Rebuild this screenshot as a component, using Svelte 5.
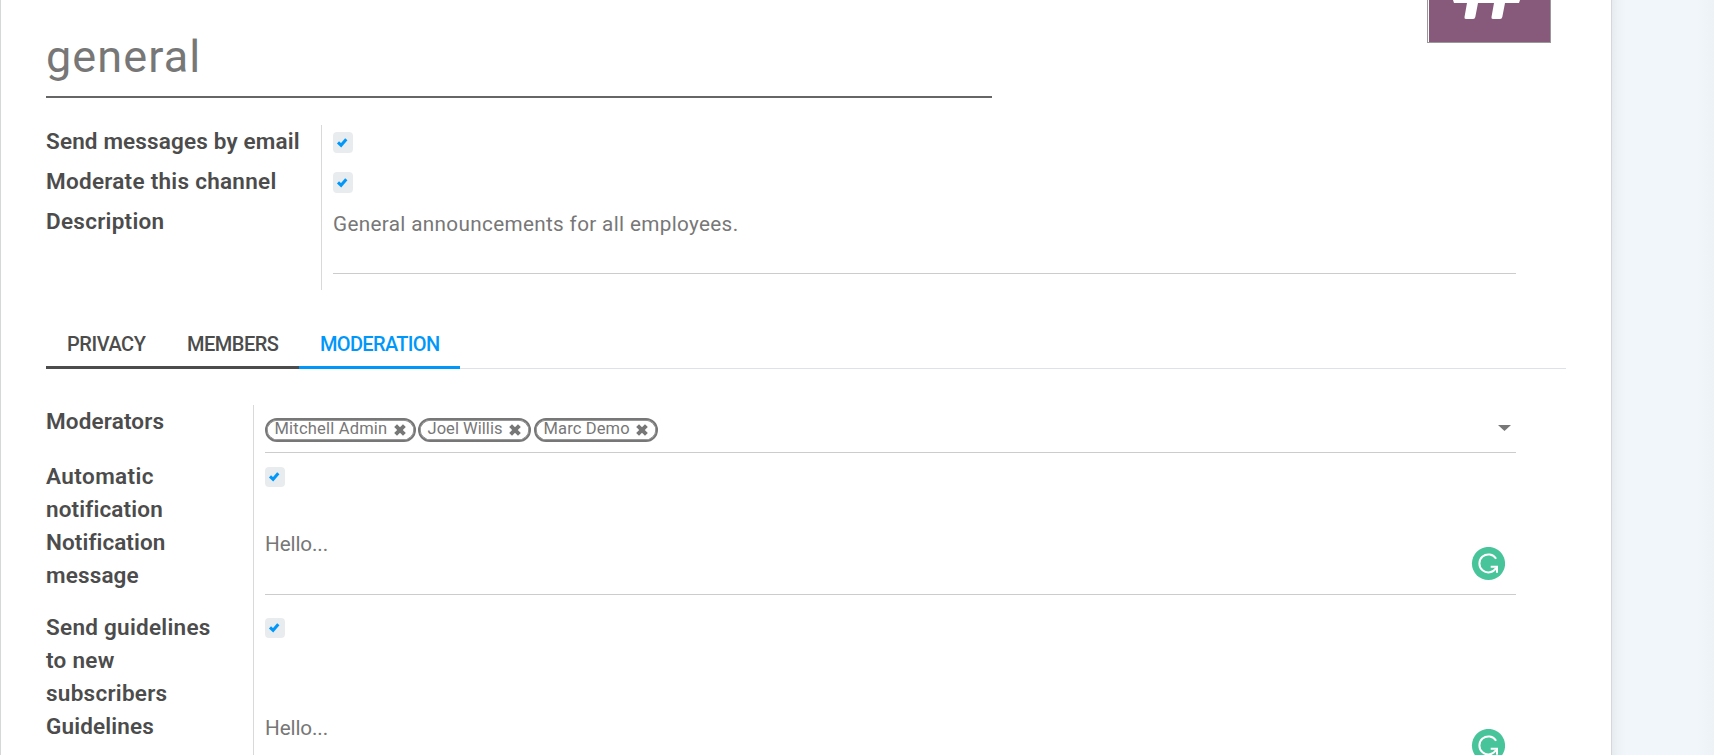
<script>
  const tabs = [
    { name: 'PRIVACY', w: 120, ls: -0.45, active: false },
    { name: 'MEMBERS', w: 133, ls: -0.5, active: false },
    { name: 'MODERATION', w: 161, ls: -0.66, active: true }
  ];
  const tags = [
    { name: 'Mitchell Admin', w: 151, ls: 0.2 },
    { name: 'Joel Willis', w: 113, ls: 0.04 },
    { name: 'Marc Demo', w: 124, ls: 0.14 }
  ];
</script>

{#snippet check()}
  <span class="check">
    <svg width="20" height="20" viewBox="0 0 20 20"><path d="M5 10.300 L8.100 13.300 L13.300 7.300" fill="none" stroke="#0097fb" stroke-width="3" /></svg>
  </span>
{/snippet}

{#snippet badge()}
  <svg class="badge" width="34" height="34" viewBox="0 0 34 34">
    <circle cx="17.5" cy="16.5" r="16.6" fill="#48c49b" />
    <path d="M25.100 11.800 A9 9 0 1 0 25.100 21.100" fill="none" stroke="#fff" stroke-width="2" />
    <path d="M19.700 19.800 H26 V25.800" fill="none" stroke="#fff" stroke-width="2" />
  </svg>
{/snippet}

<div class="page">
  <main class="sheet">
    <header>
      <div class="title"><span>general</span></div>
      <div class="avatar">
        <svg width="122" height="42" viewBox="0 0 122 42"><rect x="1" width="121" height="42" fill="#875a7b" /><path d="M25 0 H92 L91 3 H77 L74.300 17 Q74 19 72 19 H65 Q63 19 63.500 17 L66 3 H50 L47.300 17 Q47 19 45 19 H38 Q36 19 36.500 17 L39 3 H26 Z" fill="#fff" /></svg>
      </div>
    </header>

    <section class="group first">
      <div class="labels">
        <div class="label tight">Send messages by email</div>
        <div class="label">Moderate this channel</div>
        <div class="label">Description</div>
      </div>
      <div class="fields">
        {@render check()}
        {@render check()}
        <div class="area desc">General announcements for all employees.</div>
      </div>
    </section>

    <nav>
      {#each tabs as tab}
        <div class="tab" class:active={tab.active} style:width="{tab.w}px" style:letter-spacing="{tab.ls}px">{tab.name}</div>
      {/each}
      <div class="rest"></div>
    </nav>

    <section class="group second">
      <div class="labels">
        <div class="label tight mods">Moderators</div>
        <div class="label two"><span class="wide">Automatic</span><br /><span class="tight">notification</span></div>
        <div class="label tight msg"><span class="snug">Notification</span><br />message</div>
        <div class="label three">Send guidelines<br />to new<br />subscribers</div>
        <div class="label tight">Guidelines</div>
      </div>
      <div class="fields">
        <div class="tags">
          {#each tags as tag}
            <div class="tag" style:width="{tag.w}px">
              <span style:letter-spacing="{tag.ls}px">{tag.name}</span>
              <svg width="12" height="12" viewBox="0 0 12 12"><path d="M1.600 1.600 L10.400 10.400 M10.400 1.600 L1.600 10.400" stroke="#777" stroke-width="4" /></svg>
            </div>
          {/each}
          <svg class="caret" width="13" height="6" viewBox="0 0 13 6"><path d="M0 0 H13 L6.500 6 Z" fill="#777" /></svg>
        </div>
        <div class="cell c1">{@render check()}</div>
        <div class="area a1"><span class="hello">Hello...</span>{@render badge()}</div>
        <div class="cell c2">{@render check()}</div>
        <div class="area a2"><span class="hello">Hello...</span>{@render badge()}</div>
      </div>
    </section>
  </main>
  <aside></aside>
</div>

<style>
  :global(body) { margin: 0; overflow: hidden; }
  * { box-sizing: border-box; }
  svg { display: block; flex: none; }
  .page {
    display: flex;
    width: 1714px;
    height: 755px;
    overflow: hidden;
    background: #f1f6fa;
    font-family: Roboto, sans-serif;
    color: #777;
  }
  .sheet {
    width: 1612px;
    height: 755px;
    padding: 0 45px;
    background: #fff;
    border: solid #d5d7d9;
    border-width: 0 1px;
    overflow: hidden;
  }
  aside {
    flex: 1;
    background: linear-gradient(90deg, #e6ebef 0, #edf2f6 6px, #f1f6fa 14px, #f1f6fa 85px, #ecf2f6 102px);
  }
  header { display: flex; justify-content: space-between; height: 98px; }
  .title {
    width: 946px;
    height: 98px;
    padding-top: 30px;
    border-bottom: 2px solid #666;
    font-size: 45px;
    line-height: 54px;
    letter-spacing: 1.1px;
    white-space: nowrap;
  }
  .avatar {
    width: 124px;
    height: 43px;
    margin-right: 15px;
    border: solid #999;
    border-width: 0 1px 1px;
  }
  .group { display: flex; }
  .first { height: 165px; margin-top: 27px; }
  .first .labels { width: 275px; }
  .first .label { height: 40px; }
  .labels { flex: none; }
  .label {
    color: #4c4c4c;
    font-size: 22.5px;
    font-weight: 600;
    line-height: 33px;
    letter-spacing: 0.27px;
    white-space: nowrap;
  }
  .tight { letter-spacing: 0.15px; }
  .snug { letter-spacing: 0.08px; }
  .wide { letter-spacing: 0.42px; }
  .fields { flex: 1; border-left: 1px solid #d9d9d9; padding-left: 11px; }
  .check {
    display: block;
    width: 20px;
    height: 20px;
    border-radius: 4px;
    background: #e9ecef;
  }
  .first .check { height: 21px; margin: 7px 0 19px; }
  .cell .check svg { transform: translateY(-1px); }
  .area {
    display: flex;
    justify-content: space-between;
    width: 1251px;
    border-bottom: 1px solid #ccc;
    font-size: 20.7px;
    line-height: 24px;
    white-space: nowrap;
  }
  .first .fields { display: flow-root; }
  .desc { width: 1183px; height: 62px; letter-spacing: 0.34px; }
  nav { display: flex; height: 79px; padding-top: 35px; }
  .tab {
    flex: none;
    height: 44px;
    padding-left: 21px;
    border-bottom: 3px solid #4c4c4c;
    color: #4c4c4c;
    font-size: 20px;
    font-weight: 500;
    line-height: 38px;
  }
  .active { border-color: #0097fb; color: #0097fb; }
  .rest { width: 1106px; height: 44px; border-bottom: 1px solid #dee2e6; }
  .second { height: 386px; margin-top: 36px; }
  .second .labels { width: 207px; }
  .mods { height: 55px; }
  .two { height: 66px; }
  .msg { height: 85px; }
  .three { height: 99px; }
  .second .fields { padding-top: 13px; }
  .tags { display: flex; gap: 2px; width: 1251px; height: 35px; border-bottom: 1px solid #ccc; }
  .tag {
    flex: none;
    display: flex;
    justify-content: space-between;
    height: 24px;
    padding: 0 8.5px 0 7.5px;
    border: 2px solid #777;
    border-radius: 12px;
    box-shadow: inset 0 0 0 0.7px #777;
    font-size: 16.5px;
    line-height: 18px;
    white-space: nowrap;
  }
  .tag:nth-child(3) { margin-left: 1px; }
  .tag svg { margin-top: 3.5px; }
  .caret { margin: 7px 5px 0 auto; }
  .c1 { height: 64px; padding-top: 14px; }
  .a1 { height: 78px; padding-top: 15px; }
  .c2 { height: 107px; padding-top: 23px; }
  .a2 { height: 90px; padding-top: 14px; }
  .hello { letter-spacing: -0.12px; }
  .a1 .badge { margin: 15px 11px 0 0; }
  .a2 .badge { margin: 13px 11px 0 0; }
</style>
